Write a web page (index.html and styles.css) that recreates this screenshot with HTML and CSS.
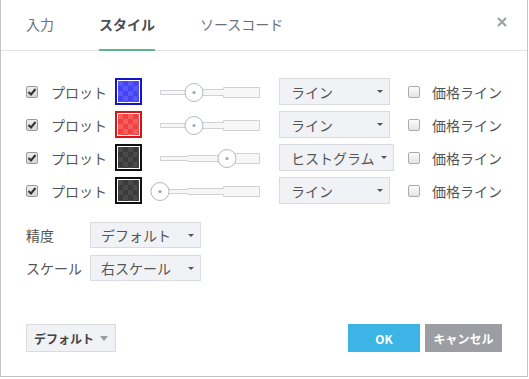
FILE: index.html
```html
<!DOCTYPE html>
<html>
<head>
  <meta charset="UTF-8">
  <title>スタイル</title>
  <link rel="stylesheet" href="styles.css">
</head>
<body>
  <div class="dialog">
    <div class="tabs">
      <div class="tab">入力</div>
      <div class="tab active">スタイル</div>
      <div class="tab">ソースコード</div>
      <svg class="close" width="10" height="10" viewBox="0 0 10 10">
        <path d="M1 1 L9 9 M9 1 L1 9" stroke="#9ea1a8" stroke-width="2.2"/>
      </svg>
    </div>

    <div class="content">
      <div class="plots">
        <div class="plot-row">
          <span class="check checked"><svg width="10" height="10" viewBox="0 0 10 10"><path d="M1.5 5 L4 7.5 L8.5 2" fill="none" stroke="#333" stroke-width="2"/></svg></span>
          <span class="plot-label">プロット</span>
          <span class="swatch swatch-blue"></span>
          <svg class="slider" width="137" height="27" viewBox="0 0 137 27">
            <path d="M18.5 12.5 H45.5 V11.5 H81.5 V9.5 H117.5 V19.5 H81.5 V17.5 H45.5 V16.5 H18.5 Z" fill="#f7f7f7" stroke="#cfd1d4"/>
            <circle cx="52" cy="14.5" r="9" fill="#fff" stroke="#b3b7bf"/>
            <circle cx="52" cy="14.5" r="1.6" fill="#a2a7b0"/>
          </svg>
          <div class="select-col"><div class="select"><span>ライン</span><i class="caret"></i></div></div>
          <span class="check"></span>
          <span class="price-label">価格ライン</span>
        </div>

        <div class="plot-row">
          <span class="check checked"><svg width="10" height="10" viewBox="0 0 10 10"><path d="M1.5 5 L4 7.5 L8.5 2" fill="none" stroke="#333" stroke-width="2"/></svg></span>
          <span class="plot-label">プロット</span>
          <span class="swatch swatch-red"></span>
          <svg class="slider" width="137" height="27" viewBox="0 0 137 27">
            <path d="M18.5 12.5 H45.5 V11.5 H81.5 V9.5 H117.5 V19.5 H81.5 V17.5 H45.5 V16.5 H18.5 Z" fill="#f7f7f7" stroke="#cfd1d4"/>
            <circle cx="52" cy="14.5" r="9" fill="#fff" stroke="#b3b7bf"/>
            <circle cx="52" cy="14.5" r="1.6" fill="#a2a7b0"/>
          </svg>
          <div class="select-col"><div class="select"><span>ライン</span><i class="caret"></i></div></div>
          <span class="check"></span>
          <span class="price-label">価格ライン</span>
        </div>

        <div class="plot-row">
          <span class="check checked"><svg width="10" height="10" viewBox="0 0 10 10"><path d="M1.5 5 L4 7.5 L8.5 2" fill="none" stroke="#333" stroke-width="2"/></svg></span>
          <span class="plot-label">プロット</span>
          <span class="swatch swatch-black"></span>
          <svg class="slider" width="137" height="27" viewBox="0 0 137 27">
            <path d="M18.5 12.5 H45.5 V11.5 H81.5 V9.5 H117.5 V19.5 H81.5 V17.5 H45.5 V16.5 H18.5 Z" fill="#f7f7f7" stroke="#cfd1d4"/>
            <circle cx="85" cy="14.5" r="9" fill="#fff" stroke="#b3b7bf"/>
            <circle cx="85" cy="14.5" r="1.6" fill="#a2a7b0"/>
          </svg>
          <div class="select-col"><div class="select"><span>ヒストグラム</span><i class="caret"></i></div></div>
          <span class="check"></span>
          <span class="price-label">価格ライン</span>
        </div>

        <div class="plot-row">
          <span class="check checked"><svg width="10" height="10" viewBox="0 0 10 10"><path d="M1.5 5 L4 7.5 L8.5 2" fill="none" stroke="#333" stroke-width="2"/></svg></span>
          <span class="plot-label">プロット</span>
          <span class="swatch swatch-black"></span>
          <svg class="slider" width="137" height="27" viewBox="0 0 137 27">
            <path d="M18.5 12.5 H45.5 V11.5 H81.5 V9.5 H117.5 V19.5 H81.5 V17.5 H45.5 V16.5 H18.5 Z" fill="#f7f7f7" stroke="#cfd1d4"/>
            <circle cx="18" cy="14.5" r="9" fill="#fff" stroke="#b3b7bf"/>
            <circle cx="18" cy="14.5" r="1.6" fill="#a2a7b0"/>
          </svg>
          <div class="select-col"><div class="select"><span>ライン</span><i class="caret"></i></div></div>
          <span class="check"></span>
          <span class="price-label">価格ライン</span>
        </div>
      </div>

      <div class="settings">
        <div class="setting-row">
          <span class="setting-label">精度</span>
          <div class="select small"><span>デフォルト</span><i class="caret"></i></div>
        </div>
        <div class="setting-row">
          <span class="setting-label">スケール</span>
          <div class="select small"><span>右スケール</span><i class="caret"></i></div>
        </div>
      </div>
    </div>

    <div class="footer">
      <button class="btn-default">デフォルト <i class="caret big"></i></button>
      <button class="btn-ok">OK</button>
      <button class="btn-cancel">キャンセル</button>
    </div>
  </div>
</body>
</html>
```

FILE: styles.css
```css
body {
  margin: 0;
  background-color: #fff;
  font-family: "Noto Sans CJK JP", "Noto Sans", sans-serif;
  color: #555;
}
.dialog {
  width: 528px;
  height: 377px;
  box-sizing: border-box;
  border: 1px solid #c4c4c4;
  border-top: none;
  display: flex;
  flex-direction: column;
}
.tabs {
  display: flex;
  align-items: flex-start;
  height: 50px;
  border-bottom: 1px solid #dfe1e4;
  padding: 0 20px 0 25px;
}
.tab {
  height: 49px;
  line-height: 49px;
  font-size: 14px;
  color: #6d7079;
  margin-right: 45px;
  border-bottom: 2px solid transparent;
}
.tab.active {
  font-weight: bold;
  color: #4a4e57;
  border-bottom-color: #5bb68a;
}
.close {
  margin-left: auto;
  margin-top: 17px;
}
.content {
  padding: 27px 0 0 25px;
}
.plots {
  display: flex;
  flex-direction: column;
  gap: 6px;
}
.plot-row {
  display: flex;
  align-items: center;
  height: 27px;
  font-size: 14px;
}
.check {
  width: 12px;
  height: 12px;
  box-sizing: border-box;
  border: 1px solid #a9abae;
  border-radius: 2px;
  background: linear-gradient(#fbfbfb, #e4e4e4);
  display: flex;
  align-items: center;
  justify-content: center;
}
.check.checked {
  background: linear-gradient(#eeeeee, #d6d6d6);
  border-color: #999;
}
.plot-label {
  width: 64px;
  margin-left: 13px;
}
.swatch {
  width: 27px;
  height: 27px;
  box-sizing: border-box;
  border: 2px solid;
  padding: 1px;
  background-clip: content-box;
  background-origin: content-box;
  background-size: 10px 10px;
}
.swatch-blue {
  border-color: #1414c8;
  background-image: conic-gradient(#4444f2 25%, #5858ff 0 50%, #4444f2 0 75%, #5858ff 0);
}
.swatch-red {
  border-color: #d81414;
  background-image: conic-gradient(#ee4242 25%, #f55c5c 0 50%, #ee4242 0 75%, #f55c5c 0);
}
.swatch-black {
  border-color: #111;
  background-image: conic-gradient(#3b3b3b 25%, #4a4a4a 0 50%, #3b3b3b 0 75%, #4a4a4a 0);
}
.slider {
  display: block;
}
.select-col {
  width: 129px;
}
.select {
  display: inline-flex;
  align-items: center;
  justify-content: space-between;
  min-width: 111px;
  height: 27px;
  box-sizing: border-box;
  padding: 0 6px 0 11px;
  background-color: #f1f2f5;
  border: 1px solid #d9dbdf;
  font-size: 14px;
  color: #555;
}
.caret {
  display: inline-block;
  width: 0;
  height: 0;
  margin-left: 6px;
  border-left: 3px solid transparent;
  border-right: 3px solid transparent;
  border-top: 3px solid #555;
}
.caret.big {
  margin-left: 6px;
  border-left-width: 4.5px;
  border-right-width: 4.5px;
  border-top-width: 5px;
  border-top-color: #999;
}
.price-label {
  margin-left: 12px;
}
.settings {
  margin-top: 18px;
  display: flex;
  flex-direction: column;
  gap: 7px;
}
.setting-row {
  display: flex;
  align-items: center;
  font-size: 14px;
}
.setting-label {
  width: 64px;
}
.select.small {
  height: 26px;
  padding-left: 10px;
}
.footer {
  margin-top: auto;
  display: flex;
  align-items: center;
  padding: 0 25px 24px 25px;
}
button {
  height: 28px;
  border: none;
  font-family: inherit;
  font-size: 12px;
  font-weight: bold;
  cursor: pointer;
}
.btn-default {
  width: 90px;
  margin-right: auto;
  background-color: #f1f2f5;
  border: 1px solid #d9dbdf;
  color: #444;
  display: flex;
  align-items: center;
  justify-content: center;
  padding: 0;
}
.btn-ok {
  width: 72px;
  background-color: #3cb4e5;
  color: #fff;
  margin-right: 5px;
}
.btn-cancel {
  width: 77px;
  background-color: #9c9ea3;
  color: #fff;
}
```
